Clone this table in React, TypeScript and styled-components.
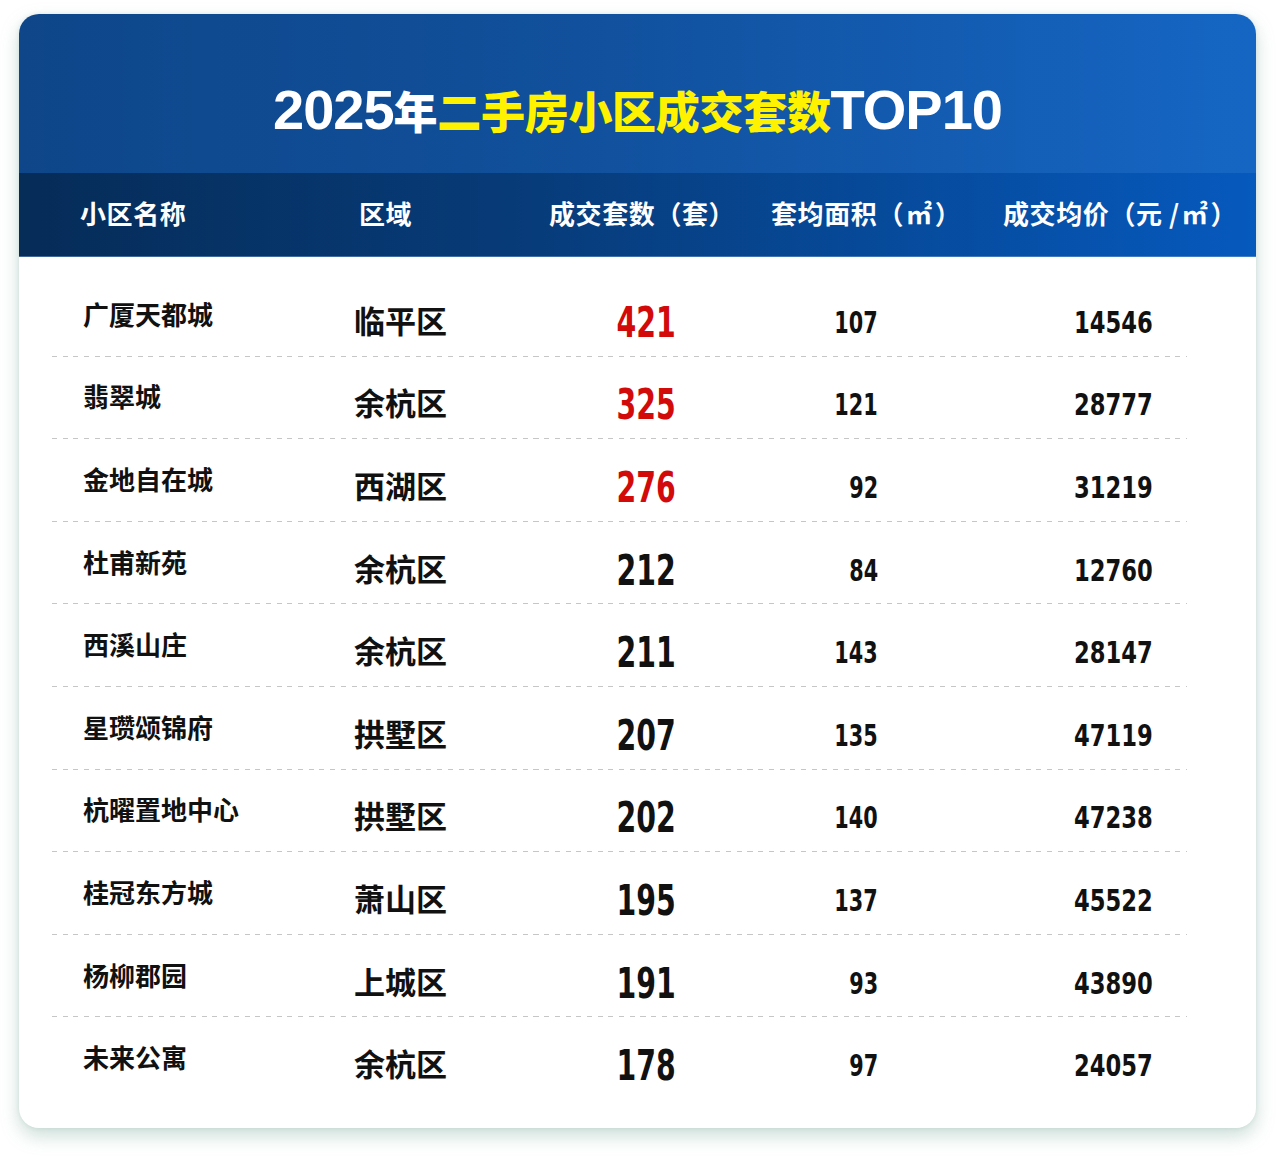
import React from "react";
import styled, { createGlobalStyle } from "styled-components";

const Global = createGlobalStyle`
  html, body { margin: 0; padding: 0; background: #ffffff; }
  body { font-family: "Noto Sans CJK SC", "Noto Sans", sans-serif; }
`;

const Page = styled.div`
  width: 1280px;
  height: 1158px;
  padding: 14px 24px 0 19px;
  box-sizing: border-box;
`;

const Card = styled.div`
  width: 1237px;
  height: 1114px;
  border-radius: 20px;
  background: #ffffff;
  overflow: hidden;
  box-shadow: 0 8px 18px rgba(110, 160, 145, 0.35), 0 0 4px rgba(110, 150, 140, 0.18);
  display: flex;
  flex-direction: column;
`;

const TitleBand = styled.div`
  height: 159px;
  background: linear-gradient(90deg, #0e4689 0%, #11509c 45%, #1566c4 100%);
  display: flex;
  align-items: center;
  justify-content: center;
  padding-top: 32px;
  box-sizing: border-box;
`;

const Title = styled.h1`
  margin: 0;
  display: flex;
  align-items: baseline;
  font-weight: 700;
  line-height: 1;
`;

const Latin = styled.span<{ $color?: string }>`
  font-family: "Liberation Sans", Arial, sans-serif;
  font-size: 56px;
  font-weight: 700;
  color: ${(p) => p.$color || "#ffffff"};
  letter-spacing: -1px;
`;

const Cjk = styled.span<{ $color?: string }>`
  font-family: "Noto Sans CJK SC", sans-serif;
  font-size: 44px;
  font-weight: 900;
  color: ${(p) => p.$color || "#ffffff"};
  letter-spacing: -0.3px;
`;

const HeaderRow = styled.div`
  height: 84px;
  background: linear-gradient(90deg, #062c58 0%, #073b78 40%, #0659bd 100%);
  border-bottom: 1px solid rgba(120, 160, 210, 0.5);
  box-sizing: border-box;
  display: grid;
  grid-template-columns: 279px 190px 222px 232px 1fr;
  align-items: center;
  padding-left: 61px;
`;

const HeadCell = styled.div`
  color: #ffffff;
  font-family: "Noto Sans CJK SC", sans-serif;
  font-size: 26px;
  font-weight: 700;
  white-space: nowrap;
  letter-spacing: 0.6px;
  padding-bottom: 4px;
`;

const Unit = styled.span`
  font-size: 26px;
  margin: 0 2px;
`;

const Body = styled.div`
  flex: 1;
  padding: 17px 69px 0 33px;
  display: flex;
  flex-direction: column;
`;

const Row = styled.div<{ $last?: boolean }>`
  height: 82.6px;
  box-sizing: border-box;
  display: grid;
  grid-template-columns: 271px 178px 144px 202px 275px;
  align-items: center;
  padding: 0 34px 0 31px;
  background-image: ${(p) =>
    p.$last
      ? "none"
      : "repeating-linear-gradient(90deg, #c6c6c6 0 5px, transparent 5px 10.7px)"};
  background-size: 100% 1px;
  background-position: 0 100%;
  background-repeat: no-repeat;
`;

const Name = styled.div`
  font-family: "Noto Sans CJK SC", sans-serif;
  font-size: 26px;
  font-weight: 700;
  color: #111111;
  margin-top: -4px;
  white-space: nowrap;
`;

const District = styled.div`
  font-family: "Noto Sans CJK SC", sans-serif;
  font-size: 31px;
  font-weight: 700;
  color: #111111;
  margin-top: 8px;
  white-space: nowrap;
`;

const NumCell = styled.div`
  text-align: right;
  line-height: 1;
  margin-top: 14px;
`;

const Num = styled.span<{ $size: number; $scale: number; $red?: boolean }>`
  display: inline-block;
  font-family: "DejaVu Sans", "Liberation Sans", sans-serif;
  font-weight: 700;
  font-size: ${(p) => p.$size}px;
  color: ${(p) => (p.$red ? "#d20a0a" : "#111111")};
  transform: scaleX(${(p) => p.$scale});
  transform-origin: 100% 50%;
  white-space: nowrap;
`;

type Item = { name: string; district: string; count: number; area: number; price: number };

const data: Item[] = [
  { name: "广厦天都城", district: "临平区", count: 421, area: 107, price: 14546 },
  { name: "翡翠城", district: "余杭区", count: 325, area: 121, price: 28777 },
  { name: "金地自在城", district: "西湖区", count: 276, area: 92, price: 31219 },
  { name: "杜甫新苑", district: "余杭区", count: 212, area: 84, price: 12760 },
  { name: "西溪山庄", district: "余杭区", count: 211, area: 143, price: 28147 },
  { name: "星瓒颂锦府", district: "拱墅区", count: 207, area: 135, price: 47119 },
  { name: "杭曜置地中心", district: "拱墅区", count: 202, area: 140, price: 47238 },
  { name: "桂冠东方城", district: "萧山区", count: 195, area: 137, price: 45522 },
  { name: "杨柳郡园", district: "上城区", count: 191, area: 93, price: 43890 },
  { name: "未来公寓", district: "余杭区", count: 178, area: 97, price: 24057 },
];

export default function App() {
  return (
    <>
      <Global />
      <Page>
        <Card>
          <TitleBand>
            <Title>
              <Latin>2025</Latin>
              <Cjk>年</Cjk>
              <Cjk $color="#fff200">二手房小区成交套数</Cjk>
              <Latin>TOP10</Latin>
            </Title>
          </TitleBand>
          <HeaderRow>
            <HeadCell>小区名称</HeadCell>
            <HeadCell>区域</HeadCell>
            <HeadCell>成交套数（套）</HeadCell>
            <HeadCell>
              套均面积（<Unit>㎡</Unit>）
            </HeadCell>
            <HeadCell>
              成交均价（元 /<Unit>㎡</Unit>）
            </HeadCell>
          </HeaderRow>
          <Body>
            {data.map((d, i) => (
              <Row key={d.name} $last={i === data.length - 1}>
                <Name>{d.name}</Name>
                <District>{d.district}</District>
                <NumCell>
                  <Num $size={43} $scale={0.66} $red={i < 3}>
                    {d.count}
                  </Num>
                </NumCell>
                <NumCell>
                  <Num $size={31} $scale={0.67}>{d.area}</Num>
                </NumCell>
                <NumCell>
                  <Num $size={31} $scale={0.73}>{d.price}</Num>
                </NumCell>
              </Row>
            ))}
          </Body>
        </Card>
      </Page>
    </>
  );
}
